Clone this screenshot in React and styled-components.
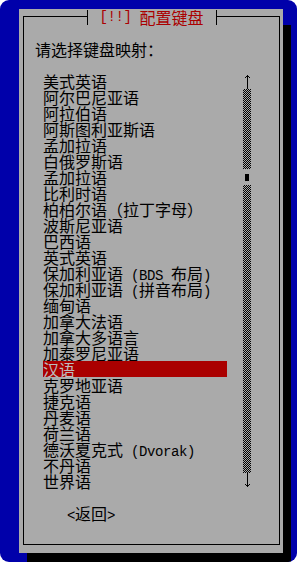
import React from 'react';
import styled, { createGlobalStyle } from 'styled-components';

const GlobalStyle = createGlobalStyle`
  html, body { margin: 0; padding: 0; background: #ffffff; }
  body { font-family: "Noto Sans CJK SC", "Noto Sans", sans-serif; }
`;

const Screen = styled.div`
  width: 297px;
  height: 562px;
  box-sizing: border-box;
  background: #0000aa;
  border-radius: 9px;
  overflow: hidden;
  padding: 9px 0 0 19px;
`;

const Dialog = styled.div`
  width: 264px;
  height: 544px;
  box-sizing: border-box;
  background: #aaaaaa;
  box-shadow: 8px 16px 0 #000000;
  display: flex;
  flex-direction: column;
  padding: 7px 3px 8px 4px;
`;

const Frame = styled.div`
  flex: 1;
  border: 1px solid #000000;
  display: flex;
  flex-direction: column;
`;

const Title = styled.div`
  align-self: center;
  margin-top: -7px;
  width: 130px;
  height: 15px;
  box-sizing: border-box;
  border-left: 1px solid #000000;
  border-right: 1px solid #000000;
  background: #aaaaaa;
  display: flex;
  align-items: center;
  justify-content: center;
  color: #aa0000;
  font-size: 16px;
  line-height: 15px;
  white-space: nowrap;
`;

const Body = styled.div`
  display: flex;
  flex-direction: column;
  padding: 16px 0 0 11px;
`;

const Line = styled.div`
  height: 16px;
  line-height: 16px;
  font-size: 16px;
  color: #000000;
  white-space: nowrap;
`;

const ListArea = styled.div`
  display: flex;
  margin: 16px 0 0 8px;
`;

const Items = styled.div`
  width: 184px;
  display: flex;
  flex-direction: column;
`;

const Row = styled.div`
  height: 16px;
  line-height: 16px;
  font-size: 16px;
  white-space: nowrap;
  background: ${(p) => (p.$active ? '#aa0000' : 'transparent')};
  color: ${(p) => (p.$active ? '#bdbdbd' : '#000000')};
`;

const Scrollbar = styled.div`
  width: 8px;
  margin-left: 16px;
  display: flex;
  flex-direction: column;
`;

const Cell = styled.div`
  height: 16px;
  display: flex;
  align-items: center;
  justify-content: center;
`;

const Track = styled.div`
  height: ${(p) => p.$rows * 16}px;
  background-color: #aaaaaa;
  background-image: repeating-conic-gradient(#000000 0% 25%, transparent 0% 50%);
  background-size: 2px 2px;
`;

const Thumb = styled.div`
  width: 4px;
  height: 7px;
  background: #000000;
`;

const ButtonRow = styled.div`
  display: flex;
  margin: 16px 0 0 32px;
`;

const Button = styled.div`
  height: 16px;
  line-height: 16px;
  font-size: 16px;
  color: #000000;
  white-space: nowrap;
`;

const Latin = styled.span`
  font-family: "Liberation Mono", "DejaVu Sans Mono", monospace;
  font-size: 14px;
  letter-spacing: -0.4px;
  white-space: pre;
`;

function Mixed({ text }) {
  const parts = text.split(/([\x20-\x7e]+)/);
  return parts.map((p, i) => {
    if (p === '') return null;
    if (/^[\x20-\x7e]+$/.test(p)) return <Latin key={i}>{p}</Latin>;
    return <React.Fragment key={i}>{p}</React.Fragment>;
  });
}

const UpArrow = () => (
  <svg width="8" height="16" viewBox="0 0 8 16" shapeRendering="crispEdges">
    <rect x="4" y="2" width="1" height="14" fill="#000" />
    <rect x="3" y="3" width="1" height="1" fill="#000" />
    <rect x="5" y="3" width="1" height="1" fill="#000" />
    <rect x="2" y="4" width="1" height="1" fill="#000" />
    <rect x="6" y="4" width="1" height="1" fill="#000" />
  </svg>
);

const DownArrow = () => (
  <svg width="8" height="16" viewBox="0 0 8 16" shapeRendering="crispEdges">
    <rect x="4" y="0" width="1" height="14" fill="#000" />
    <rect x="3" y="12" width="1" height="1" fill="#000" />
    <rect x="5" y="12" width="1" height="1" fill="#000" />
    <rect x="2" y="11" width="1" height="1" fill="#000" />
    <rect x="6" y="11" width="1" height="1" fill="#000" />
  </svg>
);

const ITEMS = [
  '美式英语',
  '阿尔巴尼亚语',
  '阿拉伯语',
  '阿斯图利亚斯语',
  '孟加拉语',
  '白俄罗斯语',
  '孟加拉语',
  '比利时语',
  '柏柏尔语（拉丁字母）',
  '波斯尼亚语',
  '巴西语',
  '英式英语',
  '保加利亚语 (BDS 布局)',
  '保加利亚语 (拼音布局)',
  '缅甸语',
  '加拿大法语',
  '加拿大多语言',
  '加泰罗尼亚语',
  '汉语',
  '克罗地亚语',
  '捷克语',
  '丹麦语',
  '荷兰语',
  '德沃夏克式 (Dvorak)',
  '不丹语',
  '世界语',
];

const ACTIVE = 18;

export default function App() {
  return (
    <>
      <GlobalStyle />
      <Screen>
        <Dialog>
          <Frame>
            <Title>
              <Mixed text="[!!] 配置键盘" />
            </Title>
            <Body>
              <Line>请选择键盘映射：</Line>
              <ListArea>
                <Items>
                  {ITEMS.map((it, i) => (
                    <Row key={i} $active={i === ACTIVE}>
                      <Mixed text={it} />
                    </Row>
                  ))}
                </Items>
                <Scrollbar>
                  <Cell>
                    <UpArrow />
                  </Cell>
                  <Track $rows={5} />
                  <Cell>
                    <Thumb />
                  </Cell>
                  <Track $rows={18} />
                  <Cell>
                    <DownArrow />
                  </Cell>
                </Scrollbar>
              </ListArea>
              <ButtonRow>
                <Button>
                  <Mixed text="<返回>" />
                </Button>
              </ButtonRow>
            </Body>
          </Frame>
        </Dialog>
      </Screen>
    </>
  );
}
